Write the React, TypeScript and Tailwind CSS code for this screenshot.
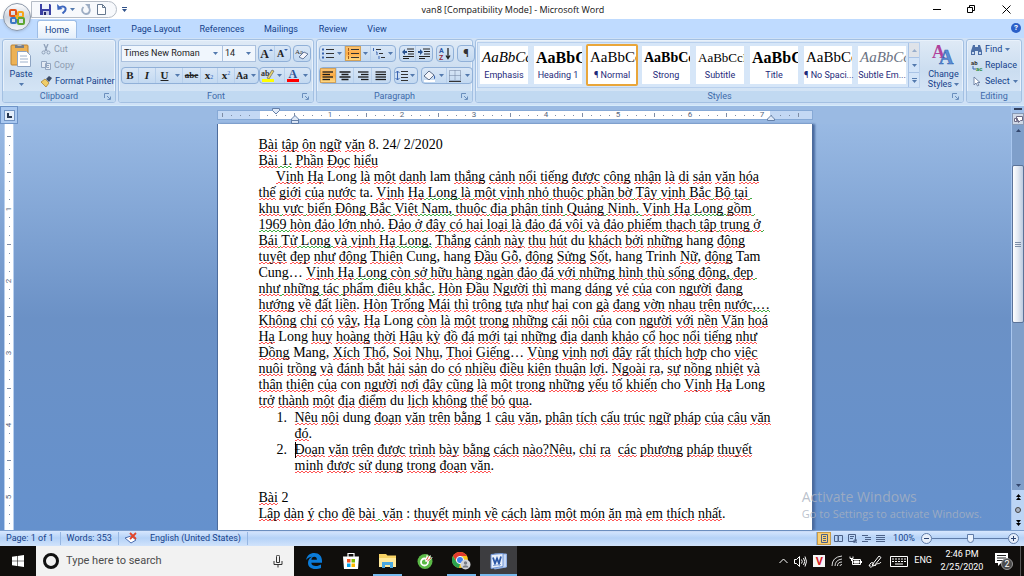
import type { ReactNode } from "react";
import clsx from "clsx";

const TABS = [
  { name: "Home", className: "w-10" },
  { name: "Insert", className: "w-11" },
  { name: "Page Layout", className: "w-[70px]" },
  { name: "References", className: "w-[62px]" },
  { name: "Mailings", className: "w-14" },
  { name: "Review", className: "w-12" },
  { name: "View", className: "w-10" },
];

const STYLES = [
  { name: "Emphasis", sample: "AaBbCc", className: "text-[15px] italic" },
  { name: "Heading 1", sample: "AaBbCc", className: "text-[16px] font-bold" },
  { name: "¶ Normal", sample: "AaBbCc", className: "text-[15px]", active: true },
  { name: "Strong", sample: "AaBbCc", className: "text-[14px] font-bold" },
  { name: "Subtitle", sample: "AaBbCcD", className: "text-[13px]" },
  { name: "Title", sample: "AaBbCc", className: "text-[16px] font-bold" },
  { name: "¶ No Spaci...", sample: "AaBbCc", className: "text-[15px]" },
  { name: "Subtle Em...", sample: "AaBbCc", className: "text-[15px] italic text-gray-500" },
];

// [..] is a spelling squiggle, {..} is a grammar squiggle
const BODY = [
  "[Bài] [tập] [ôn] [ngữ] [văn] 8. 24/ 2/2020",
  "[Bài]{ 1.} [Phần] [Đọc] [hiểu]",
  "     [Vịnh] [Hạ] Long [là] [một] [danh] lam [thắng] [cảnh] [nổi] [tiếng] [được] [công] [nhận] [là] [di] [sản] [văn] [hóa]",
  "[thế] [giới] [của] [nước] ta. [Vịnh] [Hạ]{ Long }[là]{ }[một]{ }[vịnh]{ }[nhỏ]{ }[thuộc]{ }[phần]{ }[bờ]{ }[Tây]{ }[vịnh]{ }[Bắc]{ }[Bộ]{ }[tại]{ }",
  "[khu]{ }[vực]{ }[biển]{ }[Đông]{ }[Bắc]{ }[Việt]{ Nam, }[thuộc]{ }[địa]{ }[phận]{ }[tỉnh]{ }[Quảng]{ }[Ninh]{. }[Vịnh]{ }[Hạ]{ Long }[gồm]{ }",
  "{1969 }[hòn]{ }[đảo]{ }[lớn]{ }[nhỏ]{.} [Đảo]{ }[ở]{ }[đây]{ }[có]{ }[hai]{ }[loại]{ }[là]{ }[đảo]{ }[đá]{ }[vôi]{ }[và]{ }[đảo]{ }[phiếm]{ }[thạch]{ }[tập]{ }[trung]{ }[ở]{ }",
  "[Bái]{ }[Tử]{ Long }[và]{ }[vịnh]{ }[Hạ]{ Long.} [Thắng] [cảnh] [này] [thu] [hút] du [khách] [bởi] [những] hang [động]",
  "[tuyệt] [đẹp] [như] [động] [Thiên] Cung, hang [Đầu] [Gỗ], [động] [Sửng] [Sốt], hang Trinh [Nữ], [động] Tam",
  "Cung… [Vịnh]{ }[Hạ]{ Long }[còn]{ }[sở]{ }[hữu]{ }[hàng]{ }[ngàn]{ }[đảo]{ }[đá]{ }[với]{ }[những]{ }[hình]{ }[thù]{ }[sống]{ }[động]{, }[đẹp]{ }",
  "[như]{ }[những]{ }[tác]{ }[phẩm]{ }[điêu]{ }[khắc]{.} [Hòn] [Đầu] [Người] [thì] mang [dáng] [vẻ] [của] con [người] [đang]",
  "[hướng] [về] [đất] [liền]. [Hòn] [Trống] [Mái] [thì] [trông] [tựa] [như] [hai] con [gà] [đang] [vờn] [nhau] [trên] [nước]{,…}",
  "[Không] [chỉ] [có] [vậy], [Hạ] Long [còn] [là] [một] [trong] [những] [cái] [nôi] [của] con [người] [với] [nền] [Văn] [hoá]",
  "[Hạ] Long [huy] [hoàng] [thời] [Hậu] [kỳ] [đồ] [đá] [mới] [tại] [những] [địa] [danh] [khảo] [cổ] [học] [nổi] [tiếng] [như]",
  "[Đồng] Mang, [Xích] [Thổ], [Soi] [Nhụ], [Thoi] [Giếng]… [Vùng] [vịnh] [nơi] [đây] [rất] [thích] [hợp] cho [việc]",
  "[nuôi] [trồng] [và] [đánh] [bắt] [hải] [sản] do [có] [nhiều] [điều] [kiện] [thuận] [lợi]. [Ngoài] [ra], [sự] [nồng] [nhiệt] [và]",
  "[thân] [thiện] [của] con [người] [nơi] [đây] [cũng] [là] [một] [trong] [những] [yếu] [tố] [khiến] cho [Vịnh] [Hạ] Long",
  "[trở] [thành] [một] [địa] [điểm] du [lịch] [không] [thể] [bỏ] [qua].",
];

const QUESTIONS = [
  [
    "[Nêu] [nội] dung [đoạn] [văn] [trên] [bằng] 1 [câu] [văn], [phân] [tích] [cấu] [trúc] [ngữ] [pháp] [của] [câu] [văn]",
    "[đó].",
  ],
  [
    "[Đoạn] [văn] [trên] [được] [trình] [bày] [bằng] [cách] [nào?Nêu], [chỉ] [ra]  [các] [phương] [pháp] [thuyết]",
    "[minh] [được] [sử] [dụng] [trong] [đoạn] [văn].",
  ],
];

const CLOSING = [
  "[Bài] 2",
  "[Lập] [dàn] [ý] [cho] [đề] [bài]{  }[văn] : [thuyết] [minh] [về] [cách] [làm] [một] [món] [ăn] [mà] [em] [thích] [nhất].",
];

function Line({ text }: { text: string }) {
  const parts = text.match(/\[[^\]]*\]|\{[^}]*\}|[^[{]+/g) ?? [];
  return (
    <span className="block h-4 whitespace-pre leading-4">
      {parts.map((part, i) => {
        if (part[0] === "[" || part[0] === "{") {
          return (
            <span
              key={i}
              className={clsx(
                "bg-[length:4px_1px] bg-[position:0_100%,2px_calc(100%-1px)] bg-repeat-x",
                part[0] === "["
                  ? "bg-[linear-gradient(90deg,#f55_50%,transparent_50%),linear-gradient(90deg,#f55_50%,transparent_50%)]"
                  : "bg-[linear-gradient(90deg,#4a4_50%,transparent_50%),linear-gradient(90deg,#4a4_50%,transparent_50%)]",
              )}
            >
              {part.slice(1, -1)}
            </span>
          );
        }
        return part;
      })}
    </span>
  );
}

function Arrow({ className }: { className?: string }) {
  return (
    <svg viewBox="0 0 5 3" className={clsx("h-[3px] w-[5px] shrink-0 fill-[#5379ae]", className)}>
      <path d="M0 0h5L2.5 3z" />
    </svg>
  );
}

function Tool({
  label,
  children,
  className,
  active,
  drop,
}: {
  label: string;
  children: ReactNode;
  className: string;
  active?: boolean;
  drop?: boolean;
}) {
  return (
    <button
      type="button"
      aria-label={label}
      title={label}
      className={clsx("flex h-full items-center justify-center gap-0.5", className)}
    >
      <span
        className={clsx(
          "flex h-full flex-1 items-center justify-center",
          active && "bg-gradient-to-b from-[#fbc776] via-[#fdab42] to-[#fde08b] shadow-[inset_0_0_0_1px_#d2a25a]",
        )}
      >
        {children}
      </span>
      {drop && <Arrow className="mr-0.5" />}
    </button>
  );
}

function ToolSet({ children }: { children: ReactNode }) {
  return (
    <div className="flex h-[17px] divide-x divide-[#b7cfeb] rounded-sm border border-[#90b0d8] bg-gradient-to-b from-[#d8e6f6] to-[#c3d9f1]">
      {children}
    </div>
  );
}

function Group({
  title,
  className,
  launcher = true,
  children,
}: {
  title: string;
  className: string;
  launcher?: boolean;
  children: ReactNode;
}) {
  return (
    <section
      className={clsx(
        "flex flex-col rounded-[3px] border border-[#a3c0e2] bg-gradient-to-b from-[#dfeaf6] via-[#cbddf0] to-[#d9e8f8] shadow-[inset_0_0_0_1px_#e8f1fb]",
        className,
      )}
    >
      <div className="flex-1">{children}</div>
      <footer className="relative flex h-[11px] items-center justify-center rounded-b-[2px] bg-[#c1d9f1] text-[9px] leading-none text-[#3e6aaa]">
        {title}
        {launcher && (
          <button type="button" aria-label={`${title} options`} className="absolute top-0.5 right-1">
            <svg viewBox="0 0 7 7" className="size-[7px] fill-none stroke-[#6b8fbd]">
              <path d="M.5 5V.5H5M3 3l3 3M6.500 3.500v3h-3" />
            </svg>
          </button>
        )}
      </footer>
    </section>
  );
}

function Bars({ widths }: { widths: number[] }) {
  return (
    <svg viewBox="0 0 12 10" className="h-[10px] w-3 stroke-[#1b1b1b]">
      {widths.map((w, i) => (
        <path key={i} d={`M${w < 0 ? 12 + w : 0.5} ${1 + i * 2.5}H${w < 0 ? 11.5 : w}`} strokeWidth="1.3" />
      ))}
    </svg>
  );
}

function ListIcon({ color, numbered }: { color: string; numbered?: boolean }) {
  return (
    <svg viewBox="0 0 12 11" className="h-[11px] w-3">
      {[1.5, 5.5, 9.5].map((y) => (
        <g key={y}>
          {numbered ? (
            <path d={`M1.500 ${y - 1.5}v3`} stroke={color} />
          ) : (
            <rect x="0" y={y - 1} width="2" height="2" fill={color} />
          )}
          <path d={`M4 ${y}h8`} stroke="#333" />
        </g>
      ))}
    </svg>
  );
}

function IndentIcon({ flip }: { flip?: boolean }) {
  return (
    <svg viewBox="0 0 12 11" className="h-[11px] w-3">
      <path d="M5 1h7M6 3.500h6M6 6h6M1 8.500h11M1 10.500h6" stroke="#222" />
      <path d={flip ? "M0 3h2V1l3 3-3 3V5H0z" : "M5 3H3V1L0 4l3 3V5h2z"} fill="#27518f" />
    </svg>
  );
}

function TitleBar() {
  return (
    <header className="flex h-[19px] items-start justify-between bg-white pl-[31px]">
      <div className="flex h-[18px] w-[97px] items-center">
        <div className="flex h-[17px] w-[86px] items-center gap-[6px] rounded-r-full border border-[#b5bcc6] bg-[#f7f9fc] pl-2">
          <button type="button" aria-label="Save">
            <svg viewBox="0 0 11 11" className="size-[11px]">
              <path d="M0 0h10l1 1v10H0z" fill="#3a40a4" />
              <path d="M2 0h7v5H2z" fill="#eef3fb" />
              <path d="M3 7h6v4H3z" fill="#c4cae5" />
              <path d="M4 8h2v3H4z" fill="#25296b" />
            </svg>
          </button>
          <button type="button" aria-label="Undo" className="flex items-center gap-[3px]">
            <svg viewBox="0 0 10 10" className="size-[10px]">
              <path d="M2 4c4-3 8-1 6 3L5.500 9.500" fill="none" stroke="#3f68bf" strokeWidth="2" />
              <path d="M0 0l.5 6 5-1z" fill="#3f68bf" />
            </svg>
            <Arrow />
          </button>
          <button type="button" aria-label="Redo">
            <svg viewBox="0 0 10 11" className="h-[11px] w-[10px]">
              <path d="M2.500 3C-1 7 3 10 5 10c4 0 5-5 2-7.500" fill="none" stroke="#9eaec4" strokeWidth="1.800" />
              <path d="M4 0h5v5z" fill="#9eaec4" />
            </svg>
          </button>
          <button type="button" aria-label="New">
            <svg viewBox="0 0 9 11" className="h-[11px] w-[9px]">
              <path d="M.5.5h5l3 3v7h-8zM5.500.5v3h3" fill="#fff" stroke="#66788f" />
            </svg>
          </button>
        </div>
        <button type="button" aria-label="Customize toolbar" className="ml-[5px]">
          <svg viewBox="0 0 5 5" className="size-[5px] fill-[#31538b]">
            <path d="M0 0h5v1H0zM0 2h5L2.500 5z" />
          </svg>
        </button>
      </div>
      <h1 className="pt-1 font-['Open_Sans',sans-serif] text-[9px] leading-3 text-[#111]">
        van8 [Compatibility Mode] - Microsoft Word
      </h1>
      <div className="flex h-[19px] w-[126px] items-center justify-between pr-[13px] pl-[35px]">
        <button type="button" aria-label="Minimize">
          <svg viewBox="0 0 9 9" className="size-[9px] stroke-black">
            <path d="M0 4.500h8" />
          </svg>
        </button>
        <button type="button" aria-label="Restore">
          <svg viewBox="0 0 9 9" className="size-[9px] fill-none stroke-black">
            <path d="M.5 2.500h5v5h-5zM2.500 2V.5h5v5H6" />
          </svg>
        </button>
        <button type="button" aria-label="Close">
          <svg viewBox="0 0 9 9" className="size-[9px] stroke-black">
            <path d="M.5.5l8 8M8.500.5l-8 8" />
          </svg>
        </button>
      </div>
    </header>
  );
}

function OfficeButton() {
  return (
    <button
      type="button"
      aria-label="Office Button"
      className="absolute top-[3px] left-[3px] z-10 flex size-7 items-center justify-center rounded-full border border-[#8b97a8] bg-gradient-to-b from-white via-[#ccd4df] to-[#f4f7fb] shadow-sm"
    >
      <svg viewBox="0 0 18 18" className="size-[18px] fill-none" strokeWidth="2">
        <rect x="2" y="2" width="6" height="6" rx="1" stroke="#e2551d" />
        <rect x="10" y="4" width="5" height="5" rx="1" stroke="#f5a51b" />
        <rect x="3" y="10" width="5" height="5" rx="1" stroke="#3c78c4" />
        <rect x="10" y="10" width="6" height="6" rx="1" stroke="#5da632" />
        <path d="M7 8h4M9 7v4" stroke="#f0b429" />
      </svg>
    </button>
  );
}

function TabRow() {
  return (
    <nav className="flex h-[19px] items-end bg-[#bfdbff] pr-[3px] pl-[37px]">
      <div className="flex flex-1 items-end">
        {TABS.map((tab, i) => (
          <button
            key={tab.name}
            type="button"
            className={clsx(
              "h-[18px] text-center text-[9px] leading-[18px] whitespace-nowrap text-[#15428b]",
              tab.className,
              i === 0 && "rounded-t-[3px] border border-b-0 border-[#9dbde6] bg-gradient-to-b from-white to-[#e4effb]",
            )}
          >
            {tab.name}
          </button>
        ))}
      </div>
      <button
        type="button"
        aria-label="Help"
        className="mb-[5px] size-[10px] rounded-full bg-[#2a5fc8] text-[8px] leading-[10px] font-bold text-white"
      >
        ?
      </button>
    </nav>
  );
}

function ClipboardGroup() {
  return (
    <Group title="Clipboard" className="w-[114px]">
      <div className="flex gap-0.5 pt-[3px] text-[9px] leading-[11px] text-[#15428b]">
        <button type="button" className="flex w-9 flex-col items-center">
          <svg viewBox="0 0 22 24" className="h-6 w-[22px]">
            <rect x="1" y="2" width="17" height="20" rx="1" fill="#edb255" stroke="#bd8434" />
            <path d="M5 2h9v3H5z" fill="#777e88" />
            <path d="M7.500 1h4v2h-4z" fill="#b6bdc6" />
            <path d="M7.500 8.500h9l4 4v11h-13z" fill="#fff" stroke="#8ea4c3" />
            <path d="M10 13h7M10 16h8M10 19h8" stroke="#9fb2cc" />
          </svg>
          <span className="mt-0.5">Paste</span>
          <Arrow className="mt-[3px]" />
        </button>
        <div className="flex flex-col gap-[5px] pt-px">
          <button type="button" className="flex items-center gap-[3px] text-[#8d9bb0]">
            <svg viewBox="0 0 10 11" className="h-[11px] w-[10px] fill-none stroke-[#8fa0b8]">
              <path d="M3 0l3 7M7 0L4 7" strokeWidth="1.300" />
              <circle cx="2.500" cy="8.500" r="1.500" />
              <circle cx="7.500" cy="8.500" r="1.500" />
            </svg>
            Cut
          </button>
          <button type="button" className="flex items-center gap-[3px] text-[#8d9bb0]">
            <svg viewBox="0 0 10 11" className="h-[11px] w-[10px] fill-[#e4eaf3] stroke-[#93a5c0]">
              <path d="M.5 1.500h5v6h-5zM4.500 3.500h5v6h-5zM6 5.500h2M6 7.500h2" />
            </svg>
            Copy
          </button>
          <button type="button" className="flex items-center gap-[3px] whitespace-nowrap">
            <svg viewBox="0 0 11 11" className="size-[11px]">
              <path d="M0 6l4-3 4 4-3 4z" fill="#f0cd68" stroke="#a37b28" strokeWidth=".7" />
              <path d="M5 3l3-3 3 2-3 4z" fill="#3d4d68" />
            </svg>
            Format Painter
          </button>
        </div>
      </div>
    </Group>
  );
}

function FontGroup() {
  return (
    <Group title="Font" className="w-[196px]">
      <div className="flex flex-col gap-[5px] px-[2px] pt-[5px] font-['Liberation_Serif',serif] text-[#222]">
        <div className="flex justify-between">
          <div className="flex h-[17px] divide-x divide-[#abc1de] border border-[#abc1de] bg-[#f0f6fd] font-['Roboto',sans-serif] text-[9px]">
            <label className="flex w-[101px] items-center pr-1">
              <select aria-label="Font name" className="flex-1 appearance-none bg-transparent pl-0.5 leading-[15px] outline-none">
                <option>Times New Roman</option>
              </select>
              <Arrow />
            </label>
            <label className="flex w-8 items-center pr-1">
              <select aria-label="Font size" className="w-5 flex-1 appearance-none bg-transparent pl-0.5 leading-[15px] outline-none">
                <option>14</option>
              </select>
              <Arrow />
            </label>
          </div>
          <ToolSet>
            <Tool label="Grow font" className="w-4">
              <b className="text-[12px] leading-none">A</b>
              <i className="mb-2 size-0 border-x-2 border-b-2 border-x-transparent border-b-[#3c68b0]" />
            </Tool>
            <Tool label="Shrink font" className="w-[15px]">
              <b className="text-[10px] leading-none">A</b>
              <i className="mb-2 size-0 border-x-2 border-t-2 border-x-transparent border-t-[#3c68b0]" />
            </Tool>
          </ToolSet>
          <ToolSet>
            <Tool label="Clear formatting" className="w-4">
              <svg viewBox="0 0 14 12" className="h-3 w-[14px] overflow-visible">
                <text x="0" y="6" fontSize="7" fill="#333">Aa</text>
                <path d="M4 9l5-5 4 2-5 5z" fill="#f4f4fa" stroke="#66789b" />
              </svg>
            </Tool>
          </ToolSet>
        </div>
        <div className="flex justify-between text-[11px] leading-none">
          <ToolSet>
            <Tool label="Bold" className="w-[17px]"><b>B</b></Tool>
            <Tool label="Italic" className="w-[17px]"><b className="italic">I</b></Tool>
            <Tool label="Underline" className="w-[27px]" drop><b className="underline">U</b></Tool>
            <Tool label="Strikethrough" className="w-[18px]"><b className="text-[9px] line-through">abe</b></Tool>
            <Tool label="Subscript" className="w-[17px]"><b>x</b><sub className="text-[6px] text-[#2a5fb8]">2</sub></Tool>
            <Tool label="Superscript" className="w-[17px]"><b>x</b><sup className="text-[6px] text-[#2a5fb8]">2</sup></Tool>
            <Tool label="Change case" className="w-[23px]" drop><b className="text-[10px]">Aa</b></Tool>
          </ToolSet>
          <ToolSet>
            <Tool label="Highlight" className="w-[25px]" drop>
              <svg viewBox="0 0 14 13" className="h-[13px] w-[14px] overflow-visible">
                <text x="0" y="7" fontSize="8" fontWeight="bold" fill="#333">ab</text>
                <path d="M6 9l5-8 2 1-5 8z" fill="#e7d36a" stroke="#555" strokeWidth=".6" />
                <path d="M1 10h12v3H1z" fill="#ffff00" />
              </svg>
            </Tool>
            <Tool label="Font color" className="w-[25px]" drop>
              <svg viewBox="0 0 12 13" className="h-[13px] w-3 overflow-visible">
                <text x="1.500" y="9" fontSize="12" fontWeight="bold" fill="#2f5596">A</text>
                <path d="M0 10h12v3H0z" fill="#ff0000" />
              </svg>
            </Tool>
          </ToolSet>
        </div>
      </div>
    </Group>
  );
}

function ParagraphGroup() {
  return (
    <Group title="Paragraph" className="w-[157px]">
      <div className="flex flex-col gap-[5px] px-[2px] pt-[5px]">
        <div className="flex gap-[3px]">
          <ToolSet>
            <Tool label="Bullets" className="w-[25px]" drop><ListIcon color="#3a64b0" /></Tool>
            <Tool label="Numbering" className="w-[26px]" drop active><ListIcon color="#a35a1c" numbered /></Tool>
            <Tool label="Multilevel list" className="w-6" drop>
              <svg viewBox="0 0 13 11" className="h-[11px] w-[13px] fill-none">
                <path d="M4 1.500h5M7 5.500h4M9 9.500h4" stroke="#333" />
                <path d="M1.500 0v3M4 4h1v3M7 8v3" stroke="#3a64b0" />
              </svg>
            </Tool>
          </ToolSet>
          <ToolSet>
            <Tool label="Decrease indent" className="w-4"><IndentIcon /></Tool>
            <Tool label="Increase indent" className="w-4"><IndentIcon flip /></Tool>
          </ToolSet>
          <ToolSet>
            <Tool label="Sort" className="w-4">
              <svg viewBox="0 0 12 13" className="h-[13px] w-3 overflow-visible">
                <text x="0" y="6" fontSize="7" fontWeight="bold" fill="#2c56a5">A</text>
                <text x="0" y="13" fontSize="7" fontWeight="bold" fill="#93273a">Z</text>
                <path d="M9 1v10M7 8.500L9 11.500l2-3" fill="none" stroke="#222" strokeWidth="1.300" />
              </svg>
            </Tool>
          </ToolSet>
          <ToolSet>
            <Tool label="Show marks" className="w-4"><span className="text-[11px] leading-none font-bold text-[#333]">¶</span></Tool>
          </ToolSet>
        </div>
        <div className="flex gap-[3px]">
          <ToolSet>
            <Tool label="Align left" className="w-[17px]" active><Bars widths={[11, 8, 11, 8]} /></Tool>
            <Tool label="Center" className="w-[17px]">
              <svg viewBox="0 0 12 10" className="h-[10px] w-3 stroke-[#1b1b1b]" strokeWidth="1.300">
                <path d="M.5 1h11M2.500 3.500h7M.5 6h11M2.500 8.500h7" />
              </svg>
            </Tool>
            <Tool label="Align right" className="w-[18px]"><Bars widths={[-11, -8, -11, -8]} /></Tool>
            <Tool label="Justify" className="w-[18px]"><Bars widths={[11, 11, 11, 11]} /></Tool>
          </ToolSet>
          <ToolSet>
            <Tool label="Line spacing" className="w-[22px]" drop>
              <svg viewBox="0 0 13 11" className="h-[11px] w-[13px] fill-none">
                <path d="M6 1.500h7M6 4.500h7M6 7.500h7M6 10.500h7" stroke="#333" />
                <path d="M2.500 1v9M.5 3l2-2 2 2M.5 8l2 2 2-2" stroke="#3a64b0" />
              </svg>
            </Tool>
          </ToolSet>
          <ToolSet>
            <Tool label="Shading" className="w-[25px]" drop>
              <svg viewBox="0 0 13 12" className="h-3 w-[13px]">
                <path d="M1 6l5-5 5 4-5 5z" fill="#f3f5fa" stroke="#5d6e8b" />
                <path d="M11 5c2 2 1 4 0 4z" fill="#3a64b0" />
                <path d="M1 10h11v2H1z" fill="#fff" />
              </svg>
            </Tool>
            <Tool label="Borders" className="w-[25px]" drop>
              <svg viewBox="0 0 12 12" className="size-3 fill-none stroke-[#6c7f9c]" strokeDasharray="1 1">
                <path d="M.5.5h11v10H.5zM6 .5v10M.5 5.500h11" />
                <path d="M0 11.500h12" strokeDasharray="none" stroke="#333" />
              </svg>
            </Tool>
          </ToolSet>
        </div>
      </div>
    </Group>
  );
}

function StylesGroup() {
  return (
    <Group title="Styles" className="min-w-0 flex-1">
      <div className="flex justify-between pt-[2px] pr-1 pl-px">
        <div className="flex h-[46px] border border-[#b9d0ed] bg-[#d6e6f8]">
          <div className="flex items-center gap-[2px]">
            {STYLES.map((style) => (
              <button
                key={style.name}
                type="button"
                className={clsx(
                  "flex h-[42px] w-[52px] flex-col rounded-[2px] border-2",
                  style.active ? "border-[#e9a63a]" : "border-transparent",
                )}
              >
                <span
                  className={clsx(
                    "flex h-[23px] w-full items-center overflow-hidden bg-white pl-0.5 font-['Liberation_Serif',serif] leading-none text-black",
                    style.className,
                  )}
                >
                  {style.sample}
                </span>
                <span className="h-[15px] w-full bg-white text-center text-[9px] leading-[13px] whitespace-nowrap text-[#1e2a7a]">
                  {style.name}
                </span>
              </button>
            ))}
          </div>
          <div className="flex w-[11px] flex-col divide-y divide-[#a9c3e6] border-l border-[#a9c3e6] bg-[#d3e4f8]">
            <button type="button" aria-label="Scroll up" className="flex flex-1 items-center justify-center bg-[#dfe3e9]">
              <Arrow className="rotate-180 opacity-50" />
            </button>
            <button type="button" aria-label="Scroll down" className="flex flex-1 items-center justify-center">
              <Arrow />
            </button>
            <button type="button" aria-label="More styles" className="flex flex-1 flex-col items-center justify-center gap-px">
              <i className="h-px w-[5px] bg-[#5379ae]" />
              <Arrow />
            </button>
          </div>
        </div>
        <button type="button" className="flex flex-col items-center text-[9px] leading-[10px] text-[#15428b]">
          <svg viewBox="0 0 24 24" className="size-6 font-['Liberation_Serif',serif] font-bold">
            <text x="1" y="16" fontSize="18" fill="#b0429c">A</text>
            <text x="8" y="22" fontSize="20" fill="#5b8fd6" stroke="#315fae" strokeWidth=".5">A</text>
          </svg>
          <span className="mt-[3px]">Change</span>
          <span className="flex items-center gap-0.5">
            Styles <Arrow />
          </span>
        </button>
      </div>
    </Group>
  );
}

function EditingGroup() {
  return (
    <Group title="Editing" className="w-[56px]" launcher={false}>
      <div className="flex flex-col gap-[5px] pt-1 pl-1 text-[9px] leading-[11px] whitespace-nowrap text-[#15428b]">
        <button type="button" className="flex items-center gap-[3px]">
          <svg viewBox="0 0 11 10" className="h-[10px] w-[11px] fill-[#4d6fa6]">
            <path d="M2 0h2v2h3V0h2l2 6v4H7V6H4v4H0V6z" />
            <path d="M1 7h2v2H1zM8 7h2v2H8z" fill="#c9d9ef" />
          </svg>
          Find <Arrow />
        </button>
        <button type="button" className="flex items-center gap-[2px]">
          <svg viewBox="0 0 12 11" className="h-[11px] w-3 overflow-visible font-bold">
            <text x="0" y="5" fontSize="6" fill="#333">ab</text>
            <text x="5" y="11" fontSize="6" fill="#2c8a3c">ac</text>
            <path d="M2 6v3h3" fill="none" stroke="#3a64b0" />
          </svg>
          Replace
        </button>
        <button type="button" className="flex items-center gap-[3px]">
          <svg viewBox="0 0 11 11" className="size-[11px]">
            <path d="M3 1v8l2-2 1.500 3 1.300-.7L6.500 6.500H9z" fill="#fff" stroke="#5c7095" strokeWidth=".8" />
          </svg>
          Select <Arrow />
        </button>
      </div>
    </Group>
  );
}

function TopRuler() {
  const ticks = Array.from({ length: 65 }, (_, i) => i - 4);
  return (
    <div className="relative flex h-[10px] w-[596px] border border-[#86a9d6]">
      <div className="w-[42px] bg-[#c3d8f4]" />
      <div className="flex-1 bg-white" />
      <div className="w-[42px] bg-[#c3d8f4]" />
      <div className="absolute inset-y-0 left-0 flex items-center">
        {ticks.map((t) => (
          <span key={t} className="flex w-[9px] justify-center text-[8px] leading-none text-[#56657d]">
            {t > 0 && t % 8 === 0 ? (
              t / 8
            ) : t === 0 ? null : (
              <i className={clsx("w-px bg-[#7d8ca5]", t % 4 === 0 ? "h-1" : "h-px")} />
            )}
          </span>
        ))}
      </div>
      <svg viewBox="0 0 8 7" className="absolute -top-[3px] left-[54px] h-[7px] w-2 fill-[#dfe9f7] stroke-[#6580a8]">
        <path d="M.5.5h7v2L4 6 .5 2.500z" />
      </svg>
      <svg viewBox="0 0 8 9" className="absolute top-[4px] left-[73px] h-[9px] w-2 fill-[#dfe9f7] stroke-[#6580a8]">
        <path d="M4 .5L7.500 4v4.500h-7V4zM.5 5.500h7" />
      </svg>
      <svg viewBox="0 0 8 6" className="absolute top-[4px] right-[37px] h-[6px] w-2 fill-[#dfe9f7] stroke-[#6580a8]">
        <path d="M4 .5L7.500 4v1.500h-7V4z" />
      </svg>
    </div>
  );
}

function SideRuler() {
  const ticks = Array.from({ length: 45 }, (_, i) => i);
  return (
    <div className="flex w-[18px] justify-center overflow-hidden">
      <div className="h-full w-[10px] border-x border-[#b9d0ee] bg-white pt-2">
        {ticks.map((t) => (
          <span key={t} className="flex h-[9px] items-center justify-center text-[8px] leading-none text-[#56657d]">
            {t > 0 && t % 8 === 0 ? (
              <span className="-rotate-90">{t / 8}</span>
            ) : (
              <i className={clsx("h-px bg-[#7d8ca5]", t % 4 === 0 ? "w-1" : "w-px")} />
            )}
          </span>
        ))}
      </div>
    </div>
  );
}

function Page() {
  return (
    <article className="h-full w-[596px] overflow-hidden border-x border-[#4d6c9c] bg-white pt-[13px] pl-[41px] font-['Liberation_Serif',serif] text-[14px] text-black shadow-[2px_0_2px_#4a6ba0]">
      <div>
        {BODY.map((line) => (
          <Line key={line} text={line} />
        ))}
      </div>
      <ol className="pt-px">
        {QUESTIONS.map((lines, i) => (
          <li key={i} className="flex pl-[18px]">
            <span className="w-[18px] leading-4">{i + 1}.</span>
            <div className={clsx(i === 1 && "relative before:absolute before:top-0 before:left-0 before:h-4 before:w-px before:bg-black")}>
              {lines.map((line) => (
                <Line key={line} text={line} />
              ))}
            </div>
          </li>
        ))}
      </ol>
      <div className="pt-4">
        {CLOSING.map((line) => (
          <Line key={line} text={line} />
        ))}
      </div>
    </article>
  );
}

function Scrollbar() {
  return (
    <aside className="flex w-[13px] flex-col items-center border-l border-[#a9c7ef] bg-[#7f9fca]">
      <div className="flex h-[18px] w-full flex-col items-center gap-[3px] bg-[#9fbfe9] pt-0.5">
        <i className="h-0.5 w-2 shrink-0 bg-[#32405d]" />
        <button type="button" aria-label="View ruler" className="flex h-3 w-full shrink-0 items-center justify-center border border-[#8799b5] bg-[#cfd8e6]">
          <svg viewBox="0 0 9 9" className="size-[9px] fill-white stroke-[#6d6a85]">
            <path d="M2.500 1.500h6v4h-2l-2 2v-2h-2zM.5 3.500h3v3h-3z" />
          </svg>
        </button>
      </div>
      <button type="button" aria-label="Scroll up" className="flex h-[41px] w-full justify-center pt-[5px]">
        <Arrow className="rotate-180 fill-[#33476e]" />
      </button>
      <div className="flex h-[158px] w-full flex-col items-center justify-center gap-px rounded-[2px] border border-[#5b7399] bg-gradient-to-r from-white via-[#e3e9f2] to-[#bdcbe0]">
        <i className="h-px w-[6px] bg-[#7f8fa8]" />
        <i className="h-px w-[6px] bg-[#7f8fa8]" />
        <i className="h-px w-[6px] bg-[#7f8fa8]" />
      </div>
      <div className="flex-1" />
      <button type="button" aria-label="Scroll down" className="flex h-[10px] items-center">
        <Arrow className="fill-[#33476e]" />
      </button>
      <div className="flex h-10 w-full flex-col items-center justify-around bg-[#bcd5f5]">
        <button type="button" aria-label="Previous page">
          <svg viewBox="0 0 5 6" className="h-[6px] w-[5px]"><path d="M0 3l2.500-3L5 3zM0 6l2.500-3L5 6z" /></svg>
        </button>
        <button type="button" aria-label="Select browse object" className="size-[6px] rounded-full border border-[#444] bg-[#aab4c4]" />
        <button type="button" aria-label="Next page">
          <svg viewBox="0 0 5 6" className="h-[6px] w-[5px]"><path d="M0 0h5L2.500 3zM0 3h5L2.500 6z" /></svg>
        </button>
      </div>
    </aside>
  );
}

function ViewIcon({ d, active, label }: { d: string; active?: boolean; label: string }) {
  return (
    <button
      type="button"
      aria-label={label}
      className={clsx("flex h-[13px] w-[14px] items-center justify-center", active && "border border-[#c79b4a] bg-[#fbcf72]")}
    >
      <svg viewBox="0 0 9 9" className="size-[9px] fill-none stroke-[#4c6289]">
        <path d={d} />
      </svg>
    </button>
  );
}

function StatusBar() {
  return (
    <footer className="flex h-4 items-center bg-gradient-to-b from-[#dceaff] via-[#b5d2f7] to-[#d1e3fb] text-[9px] leading-none whitespace-nowrap text-[#15428b] shadow-[inset_0_1px_0_#7d9fce]">
      <span className="border-r border-[#96b6e2] py-0.5 pr-[6px] pl-[6px]">Page: 1 of 1</span>
      <span className="border-r border-[#96b6e2] py-0.5 pr-[6px] pl-[6px]">Words: 353</span>
      <button type="button" aria-label="Proofing" className="px-[6px]">
        <svg viewBox="0 0 13 12" className="h-3 w-[13px]">
          <path d="M0 6l6-2 5 4-5 3z" fill="#fff" stroke="#4c6db0" />
          <path d="M5 1l6 6M11 1L5 7" stroke="#e2452b" strokeWidth="1.800" />
        </svg>
      </button>
      <span className="border-r border-[#96b6e2] py-0.5 pr-[6px] pl-[6px]">English (United States)</span>
      <div className="flex-1" />
      <div className="flex border-l border-[#96b6e2]">
        <ViewIcon label="Print layout" active d="M1.500.5h6v8h-6zM3 2.500h3M3 4.500h3M3 6.500h3" />
        <ViewIcon label="Full screen reading" d="M.5 1.500h3.500v6H.5zM4.500 1.500h4v6h-4z" />
        <ViewIcon label="Web layout" d="M.5.5h7v7h-7zM2 2.500h4M2 4.500h3M6 6h3v3H6z" />
        <ViewIcon label="Outline" d="M0 1.500h6M3 3.500h6M3 5.500h6M0 7.500h6" />
        <ViewIcon label="Draft" d="M0 1.500h9M0 3.500h9M0 5.500h9M0 7.500h9" />
      </div>
      <span className="w-[34px] text-center">100%</span>
      <button type="button" aria-label="Zoom out" className="flex size-[11px] items-center justify-center rounded-full border border-[#5f7ba8] bg-[#e6eefa]">
        <i className="h-px w-[5px] bg-[#2c4270]" />
      </button>
      <input
        type="range"
        aria-label="Zoom"
        min={10}
        max={190}
        defaultValue={100}
        className="h-px w-[76px] appearance-none bg-[#5f7ba8] [&::-webkit-slider-thumb]:h-[9px] [&::-webkit-slider-thumb]:w-[7px] [&::-webkit-slider-thumb]:appearance-none [&::-webkit-slider-thumb]:rounded-b-[4px] [&::-webkit-slider-thumb]:border [&::-webkit-slider-thumb]:border-[#5f7ba8] [&::-webkit-slider-thumb]:bg-[#e9f1fc]"
      />
      <button type="button" aria-label="Zoom in" className="mr-[5px] flex size-[11px] items-center justify-center rounded-full border border-[#5f7ba8] bg-[#e6eefa]">
        <svg viewBox="0 0 5 5" className="size-[5px] stroke-[#2c4270]">
          <path d="M0 2.500h5M2.500 0v5" />
        </svg>
      </button>
    </footer>
  );
}

function TaskApp({ label, children, open, active }: { label: string; children: ReactNode; open?: boolean; active?: boolean }) {
  return (
    <button
      type="button"
      aria-label={label}
      className={clsx("relative flex h-full w-[37px] items-center justify-center", active && "bg-[#3d3d40]")}
    >
      {children}
      {open && <i className={clsx("absolute bottom-0 h-0.5 bg-[#76b9ed]", active ? "inset-x-0" : "inset-x-1")} />}
    </button>
  );
}

function Taskbar() {
  return (
    <div className="flex h-[30px] items-stretch bg-[#100e0c] text-white">
      <button type="button" aria-label="Start" className="flex w-9 items-center justify-center">
        <svg viewBox="0 0 12 12" className="size-3 fill-white">
          <path d="M0 1.700l5-.7v4.700H0zM5.600.9L12 0v5.700H5.600zM0 6.300h5V11l-5-.7zM5.600 6.300H12V12l-6.400-.9z" />
        </svg>
      </button>
      <label className="flex w-[258px] items-center bg-[#f2f2f2] pr-[11px] pl-[7px]">
        <span className="size-4 rounded-full border-[3px] border-[#111]" />
        <input
          aria-label="Search"
          placeholder="Type here to search"
          className="min-w-0 flex-1 bg-transparent pl-[7px] text-[11px] outline-none placeholder:text-[#4c4c4c]"
        />
        <svg viewBox="0 0 10 13" className="h-[13px] w-[10px] fill-none stroke-[#333]">
          <path d="M3.500 1.500a1.500 1.500 0 013 0v6h-3zM1 6v3.500h8V6M5 9.500v3" />
        </svg>
      </label>
      <div className="flex pl-px">
        <TaskApp label="Edge">
          <svg viewBox="0 0 16 16" className="size-4 fill-[#0b7bd8]">
            <path d="M0 7C1 2.500 4 0 8.300 0 13 0 16 3.200 16 8v1.700H5.300c.2 2.300 2 3.300 4.500 3.300 2 0 3.800-.6 5.200-1.500v3.400c-1.600.8-3.500 1.100-5.600 1.100C4.800 16 2 13.500 2 10c0-3 1.500-5 4-6.300C3.500 4 1.500 5 0 7zm5.400-.3h5.500c0-1.800-.9-2.900-2.600-2.900S5.600 5 5.400 6.700z" />
          </svg>
        </TaskApp>
        <TaskApp label="Store">
          <svg viewBox="0 0 18 18" className="size-[18px]">
            <path d="M6 5V1.500h6V5" fill="none" stroke="#fff" strokeWidth="1.200" />
            <path d="M1 4.500h16L16 17H2z" fill="#fff" />
            <path d="M5 7h3.500v3.500H5z" fill="#f25022" />
            <path d="M9.500 7H13v3.500H9.500z" fill="#7fba00" />
            <path d="M5 11.500h3.500V15H5z" fill="#00a4ef" />
            <path d="M9.500 11.500H13V15H9.500z" fill="#ffb900" />
          </svg>
        </TaskApp>
        <TaskApp label="File Explorer" open>
          <svg viewBox="0 0 17 14" className="h-[14px] w-[17px]">
            <path d="M0 0h7l1.500 1.500H17V13H0z" fill="#f7d264" />
            <path d="M0 4h17v9H0z" fill="#ffe99b" />
            <path d="M3 8h11v6h-3v-3H6v3H3z" fill="#4aa8e0" />
          </svg>
        </TaskApp>
        <TaskApp label="Coc Coc">
          <svg viewBox="0 0 16 16" className="size-4">
            <circle cx="8" cy="8.500" r="7.500" fill="#5bb947" />
            <circle cx="7.500" cy="9" r="3.500" fill="none" stroke="#fff" strokeWidth="1.800" />
            <path d="M8 8.500L10 1l1 3 3-2-1 3 3-1-5 5z" fill="#fff" />
            <path d="M9.500 7l2-3.500M10.500 8L14 5" stroke="#e14b3a" />
          </svg>
        </TaskApp>
        <TaskApp label="Chrome" open>
          <svg viewBox="0 0 19 18" className="h-[18px] w-[19px]">
            <circle cx="8" cy="8" r="8" fill="#f9c61c" />
            <path d="M8 0a8 8 0 016.900 4H8L4.500 9.500 1 4a8 8 0 017-4z" fill="#e23b30" />
            <path d="M1 4l3.500 6L8 12l-1 4A8 8 0 011 4z" fill="#2aa350" />
            <circle cx="8" cy="8" r="3.600" fill="#3f82ee" stroke="#fff" />
            <circle cx="13.500" cy="12.500" r="5" fill="#d0d3d8" />
            <circle cx="13.500" cy="11" r="1.700" fill="#777c84" />
            <path d="M10.500 15.500c.5-3 5.500-3 6 0z" fill="#777c84" />
          </svg>
        </TaskApp>
        <TaskApp label="Word" open active>
          <svg viewBox="0 0 17 17" className="size-[17px]">
            <path d="M4.500 1h12v13l-12 2z" fill="#c9d9f5" stroke="#8fb0e6" />
            <path d="M1 1.500L13 .5v13L1 15.500z" fill="#e8effb" stroke="#6d92d3" />
            <path d="M3 4.500l2 6 2-5 2 5 2-7" fill="none" stroke="#2b57a6" strokeWidth="1.800" />
            <path d="M3 12.500l8-1" stroke="#7d9fd9" />
          </svg>
        </TaskApp>
      </div>
      <div className="flex-1" />
      <div className="flex items-center gap-[6px] text-[9px]">
        <svg viewBox="0 0 9 6" className="h-[6px] w-[9px] fill-none stroke-white"><path d="M.5 5l4-4 4 4" /></svg>
        <svg viewBox="0 0 13 11" className="h-[11px] w-[13px] fill-none stroke-white">
          <path d="M.5 3.500h2l3-3v10l-3-3h-2zM7.500 3.500q1.500 2 0 4M9.500 2q2.500 3.500 0 7M11 .5q3 5 0 10" />
        </svg>
        <span className="flex size-3 items-center justify-center bg-[#f6f6f6] text-[11px] leading-none font-bold text-[#d8232a]">V</span>
        <svg viewBox="0 0 12 12" className="size-3 fill-none stroke-[#d8d8d8]">
          <path d="M1 11Q1 2 11 1M4 11q0-6 7-7M6.500 11q0-4 4.500-4M9 11q0-1.500 2-1.500" />
        </svg>
        <svg viewBox="0 0 13 10" className="h-[10px] w-[13px] fill-none stroke-white">
          <path d="M3.500 3.500h8v5h-8zM12.500 5v2M1 .5v2h3v-2M2.500 2.500V5" />
          <path d="M5 5h5v2H5z" fill="#fff" />
        </svg>
        <svg viewBox="0 0 14 13" className="h-[13px] w-[14px] fill-none stroke-white">
          <path d="M4 10L11 1l2 1.500L6 11zM1 11c2-5 5-4 4-1s-4 3-3 0M7 11c2-4 4-1 6-4" />
        </svg>
        <svg viewBox="0 0 18 11" className="ml-0.5 h-[11px] w-[18px] fill-none stroke-white">
          <path d="M.5.5h17v10H.5z" />
          <path d="M2 3h14M2 5.500h14" strokeDasharray="2 1" />
          <path d="M5 8h8" />
        </svg>
        <span>ENG</span>
        <div className="w-12 text-center leading-[13px]">
          <div>2:46 PM</div>
          <div>2/25/2020</div>
        </div>
        <button type="button" aria-label="Notifications" className="ml-0.5">
          <svg viewBox="0 0 19 18" className="h-[18px] w-[19px]">
            <path d="M1 1h13v10H7l-3 3v-3H1z" fill="#fff" />
            <path d="M3 3.500h9M3 6h9M3 8.500h6" stroke="#222" />
            <circle cx="13" cy="12" r="5.500" fill="#4b4b4b" stroke="#999" />
            <text x="10.500" y="15" fontSize="9" fill="#fff">2</text>
          </svg>
        </button>
        <i className="mr-[3px] ml-px h-[30px] w-px bg-[#555]" />
      </div>
    </div>
  );
}

export default function App() {
  return (
    <div className="relative flex h-screen w-full flex-col overflow-hidden bg-white font-['Roboto','Noto_Sans',sans-serif]">
      <OfficeButton />
      <TitleBar />
      <TabRow />
      <div className="flex h-[68px] gap-[2px] border-b border-[#d6ecfb] bg-[#cfe1f6] px-0.5 pt-px pb-[2px]">
        <ClipboardGroup />
        <FontGroup />
        <ParagraphGroup />
        <StylesGroup />
        <EditingGroup />
      </div>
      <main className="flex min-h-0 flex-1">
        <div className="flex min-w-0 flex-1 flex-col bg-gradient-to-b from-[#9dbde6] via-[#6b91c6] to-[#6591cd]">
          <div className="flex h-[18px] items-center bg-[#9abae3]">
            <button
              type="button"
              aria-label="Tab selector"
              className="flex h-[18px] w-[18px] items-center justify-center border border-[#6d93c8] bg-[#a9c8f0]"
            >
              <span className="flex size-[11px] items-center justify-center border border-[#7395c4] bg-[#e4eefb]">
                <i className="size-[5px] border-b-2 border-l-2 border-[#27364f]" />
              </span>
            </button>
            <div className="flex flex-1 justify-center">
              <TopRuler />
            </div>
          </div>
          <div className="flex min-h-0 flex-1">
            <SideRuler />
            <div className="relative flex flex-1 justify-center">
              <Page />
              <div className="pointer-events-none absolute right-[29px] bottom-2 font-['Open_Sans',sans-serif] text-[#a9b2c0]/80">
                <p className="text-[14px] leading-[18px]">Activate Windows</p>
                <p className="text-[11px] leading-4">Go to Settings to activate Windows.</p>
              </div>
            </div>
          </div>
        </div>
        <Scrollbar />
      </main>
      <StatusBar />
      <Taskbar />
    </div>
  );
}
